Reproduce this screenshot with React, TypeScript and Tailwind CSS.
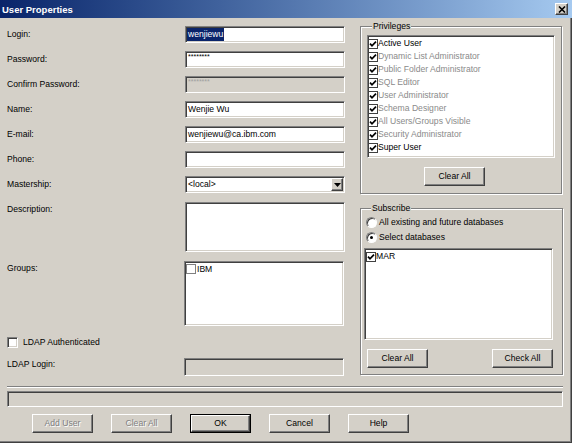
import React from "react";

const sunken =
  "border border-t-[#808080] border-l-[#808080] border-b-white border-r-white shadow-[inset_1px_1px_0_#404040,inset_-1px_-1px_0_#d4d0c8]";
const raised =
  "border border-t-white border-l-white border-b-[#404040] border-r-[#404040] shadow-[inset_-1px_-1px_0_#808080]";
const group =
  "border border-[#808080] shadow-[1px_1px_0_#fff,inset_1px_1px_0_#fff]";

function Check() {
  return (
    <svg viewBox="0 0 8 8" className="w-[8px] h-[8px]">
      <path d="M1 3.6 L3 5.8 L7 1.6" fill="none" stroke="#000" strokeWidth="1.7" />
    </svg>
  );
}

function ListCheck({ label, gray }: { label: string; gray?: boolean }) {
  return (
    <div className="flex items-center h-[13px]">
      <span className="w-[10px] h-[10px] border border-[#404040] bg-white flex items-center justify-center">
        <Check />
      </span>
      <span className={gray ? "text-[#8a8a8a]" : "text-black"}>{label}</span>
    </div>
  );
}

function Button({
  label,
  disabled,
  isDefault,
}: {
  label: string;
  disabled?: boolean;
  isDefault?: boolean;
}) {
  const inner = (
    <span
      className={`${raised} flex items-center justify-center w-full h-full ${
        disabled ? "text-[#808080] [text-shadow:1px_1px_0_#fff]" : "text-black"
      }`}
    >
      {label}
    </span>
  );
  return isDefault ? (
    <button className="w-[61px] h-[19px] border border-black flex">{inner}</button>
  ) : (
    <button className="w-[61px] h-[19px] flex">{inner}</button>
  );
}

function Radio({ checked, label }: { checked?: boolean; label: string }) {
  return (
    <div className="flex items-center h-[13px] gap-[2px]">
      <span className="w-[11px] h-[11px] rounded-full border border-t-[#808080] border-l-[#808080] border-b-white border-r-white bg-white shadow-[inset_1px_1px_0_#404040] flex items-center justify-center">
        {checked && <span className="w-[3px] h-[3px] rounded-full bg-black" />}
      </span>
      <span>{label}</span>
    </div>
  );
}

function Row({ label, children }: { label: string; children: React.ReactNode }) {
  return (
    <div className="flex items-center h-[17px]">
      <span className="w-[178px]">{label}</span>
      {children}
    </div>
  );
}

export default function App() {
  const privileges: [string, boolean][] = [
    ["Active User", false],
    ["Dynamic List Administrator", true],
    ["Public Folder Administrator", true],
    ["SQL Editor", true],
    ["User Administrator", true],
    ["Schema Designer", true],
    ["All Users/Groups Visible", true],
    ["Security Administrator", true],
    ["Super User", false],
  ];

  return (
    <div className="w-[572px] h-[443px] bg-[#d4d0c8] font-['Liberation_Sans',Arial,sans-serif] text-[8.6px] leading-[11px] text-black shadow-[inset_-1px_-1px_0_#404040,inset_-2px_-2px_0_#808080] overflow-hidden">
      {/* title bar */}
      <div className="h-[18px] flex items-center justify-between pl-[2px] pr-[4px] bg-linear-to-r from-[#0a246a] to-[#a6caf0]">
        <span className="text-white font-bold text-[9.5px]">User Properties</span>
        <span className={`${raised} w-[13px] h-[12px] bg-[#d4d0c8] flex items-center justify-center`}>
          <svg viewBox="0 0 8 7" className="w-[8px] h-[7px]">
            <path d="M1 0.5 L7 6.5 M7 0.5 L1 6.5" stroke="#000" strokeWidth="1.6" />
          </svg>
        </span>
      </div>

      <div className="flex items-start">
        {/* left form */}
        <div className="w-[360px] pl-[7px] pt-[8px] flex flex-col">
          <div className="flex flex-col gap-[8px]">
            <Row label="Login:">
              <div className={`${sunken} w-[160px] h-[17px] bg-white flex items-center pl-[1px]`}>
                <span className="bg-[#0a246a] text-white px-[1px] leading-[13px]">wenjiewu</span>
              </div>
            </Row>
            <Row label="Password:">
              <div className={`${sunken} w-[160px] h-[17px] bg-white pl-[2px] text-[7px] leading-[9px]`}>
                ********
              </div>
            </Row>
            <Row label="Confirm Password:">
              <div className={`${sunken} w-[160px] h-[17px] bg-[#d4d0c8] pl-[2px] text-[7px] leading-[9px] text-[#a0a0a0]`}>
                ********
              </div>
            </Row>
            <Row label="Name:">
              <div className={`${sunken} w-[160px] h-[17px] bg-white flex items-center pl-[2px]`}>
                Wenjie Wu
              </div>
            </Row>
            <Row label="E-mail:">
              <div className={`${sunken} w-[160px] h-[17px] bg-white flex items-center pl-[2px]`}>
                wenjiewu@ca.ibm.com
              </div>
            </Row>
            <Row label="Phone:">
              <div className={`${sunken} w-[160px] h-[17px] bg-white`} />
            </Row>
            <Row label="Mastership:">
              <div className={`${sunken} w-[160px] h-[17px] bg-white flex items-center pl-[2px] pr-[1px] py-[1px]`}>
                <span className="flex-1">&lt;local&gt;</span>
                <span className={`${raised} w-[12px] h-full bg-[#d4d0c8] flex items-center justify-center`}>
                  <svg viewBox="0 0 7 4" className="w-[7px] h-[4px]">
                    <path d="M0 0 H7 L3.5 4 Z" fill="#000" />
                  </svg>
                </span>
              </div>
            </Row>
          </div>

          <div className="flex items-start mt-[9px]">
            <span className="w-[178px] pt-[2px]">Description:</span>
            <div className={`${sunken} w-[160px] h-[50px] bg-white`} />
          </div>

          <div className="flex items-start mt-[9px]">
            <span className="w-[177px] pt-[2px]">Groups:</span>
            <div className={`${sunken} w-[160px] h-[65px] bg-white pl-[1px] pt-[1px]`}>
              <div className="flex items-center h-[12px] gap-[1px]">
                <span className="w-[10px] h-[10px] border border-[#808080] bg-white" />
                <span>IBM</span>
              </div>
            </div>
          </div>

          <div className="flex items-center mt-[11px] h-[11px] gap-[5px]">
            <span className={`${sunken} w-[11px] h-[11px] bg-white`} />
            <span>LDAP Authenticated</span>
          </div>

          <div className="flex items-start mt-[10px]">
            <span className="w-[177px] pt-[1px]">LDAP Login:</span>
            <div className={`${sunken} w-[160px] h-[18px] bg-[#d4d0c8]`} />
          </div>
        </div>

        {/* right column */}
        <div className="flex flex-col">
          <fieldset className={`${group} w-[202px] mt-[3px] pl-[6px] pb-[7px]`}>
            <legend className="ml-[5px] px-[1px] leading-[11px] bg-[#d4d0c8]">Privileges</legend>
            <div className={`${sunken} w-[188px] h-[123px] bg-white mt-[3px] pl-0 pt-[1px]`}>
              {privileges.map(([p, gray]) => (
                <ListCheck key={p} label={p} gray={gray} />
              ))}
            </div>
            <div className="mt-[9px] pl-[57px]">
              <Button label="Clear All" />
            </div>
          </fieldset>

          <fieldset className={`${group} w-[202px] mt-[9px] pl-[5px] pr-[9px] pb-[6px]`}>
            <legend className="ml-[5px] px-[1px] leading-[11px] bg-[#d4d0c8]">Subscribe</legend>
            <div className="flex flex-col gap-[2px] mt-[2px]">
              <Radio label="All existing and future databases" />
              <Radio checked label="Select databases" />
            </div>
            <div className={`${sunken} w-[189px] h-[92px] bg-white mt-[4px] -ml-[2px] pl-[1px] pt-[1px]`}>
              <ListCheck label="MAR" />
            </div>
            <div className="flex justify-between items-end mt-[8px] pl-[1px]">
              <Button label="Clear All" />
              <span className="mt-[1px]">
                <Button label="Check All" />
              </span>
            </div>
          </fieldset>
        </div>
      </div>

      {/* separator + status */}
      <div className="mx-[7px] mt-[10px] w-[556px] h-[2px] border-t border-t-[#808080] border-b border-b-white" />
      <div className={`${sunken} mx-[7px] mt-[3px] w-[556px] h-[16px]`} />

      <div className="flex pl-[32px] gap-[18px] mt-[7px]">
        <Button label="Add User" disabled />
        <Button label="Clear All" disabled />
        <Button label="OK" isDefault />
        <Button label="Cancel" />
        <Button label="Help" />
      </div>
    </div>
  );
}
